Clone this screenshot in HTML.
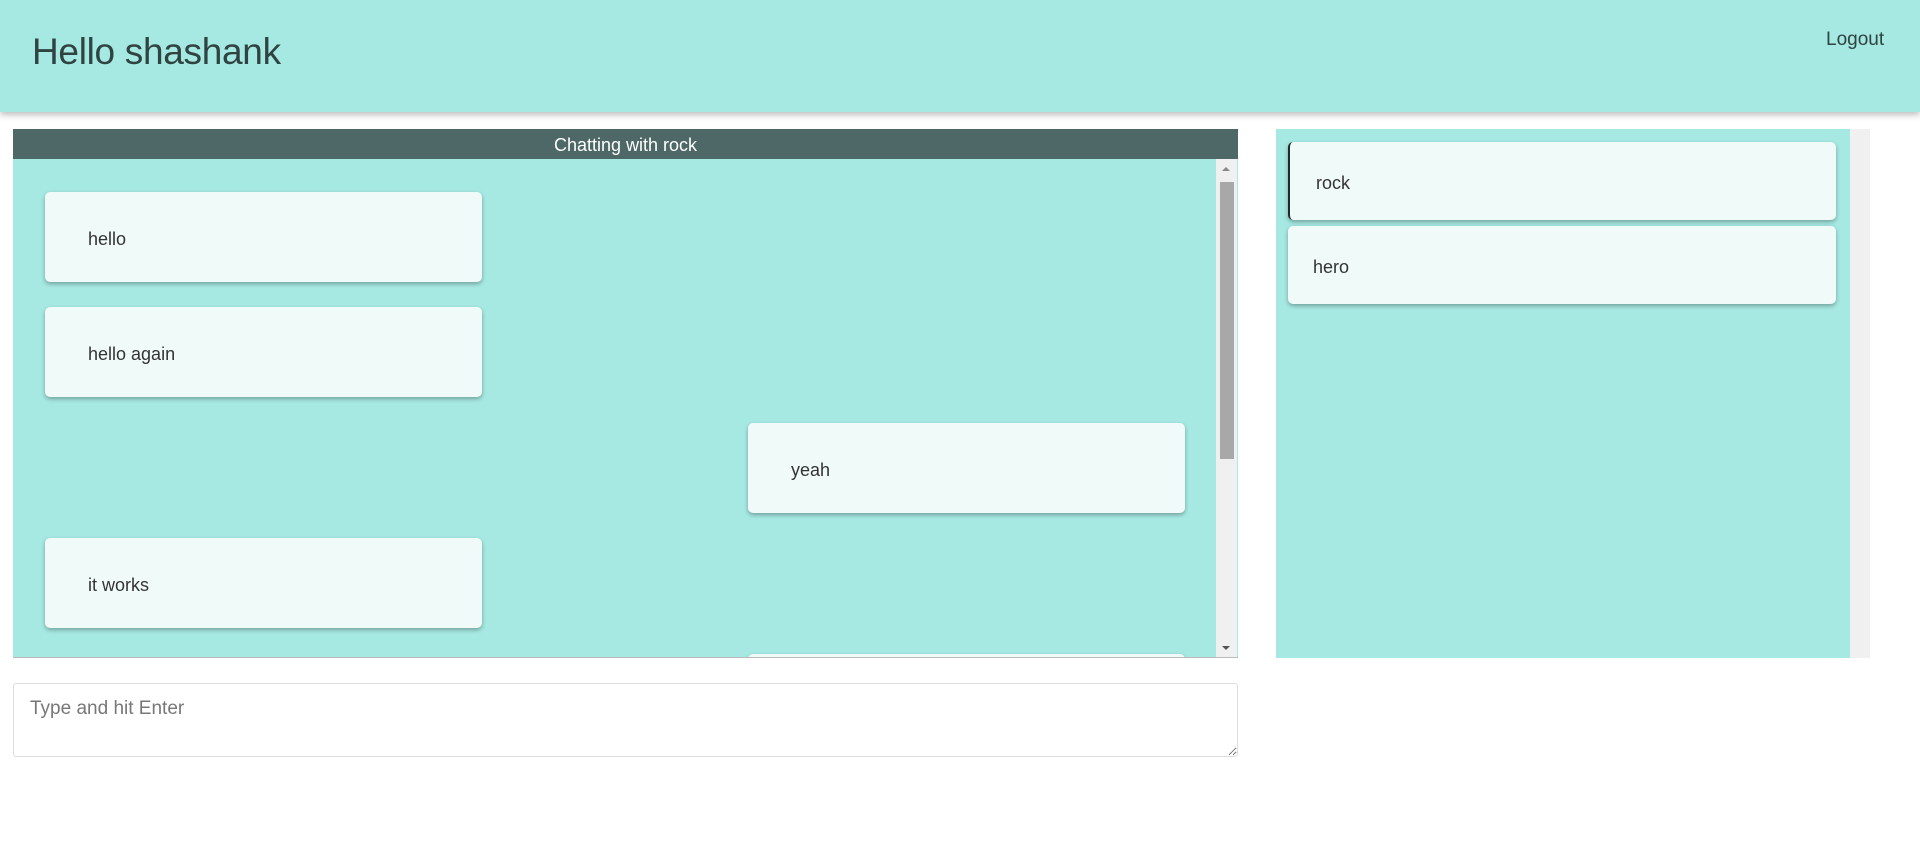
<!DOCTYPE html>
<html><head><meta charset="utf-8"><style>
*{box-sizing:border-box;margin:0;padding:0}
body{width:1920px;height:858px;background:#fff;font-family:"Liberation Sans",sans-serif;position:relative;overflow:hidden;color:#333}
.hdr{position:absolute;left:0;top:0;width:1920px;height:112px;background:#a6e8e2;box-shadow:0 3px 6px rgba(0,0,0,.25)}
.hdr h1{position:absolute;left:32px;top:31px;font-size:37px;font-weight:normal;color:#2f4340;letter-spacing:-0.3px}
.hdr .lo{position:absolute;left:1826px;top:29px;font-size:19px;color:#2f4340}
.chat{position:absolute;left:13px;top:129px;width:1225px;height:529px;background:#a6e8e2;overflow:hidden;border-bottom:1px solid #bbb}
.ch{height:30px;background:#4d6866;color:#fff;text-align:center;font-size:18px;line-height:32px}
.sb{position:absolute;left:1203px;top:30px;width:21px;height:499px;background:#f0f0f0}
.sb .th{position:absolute;left:4px;top:23px;width:14px;height:277px;background:#a8a8a8}
.sb .u{position:absolute;left:6px;top:8px;border:4px solid transparent;border-bottom:4px solid #888;border-top:0}
.sb .d{position:absolute;left:6px;bottom:8px;border:4px solid transparent;border-top:4px solid #555;border-bottom:0}
.m{position:absolute;width:437px;height:90px;background:#f0faf8;border-radius:5px;box-shadow:0 2px 4px rgba(0,0,0,.3);font-size:18px;padding-left:43px;line-height:94px;color:#333}
.side{position:absolute;left:1276px;top:129px;width:574px;height:529px;background:#a6e8e2}
.ssb{position:absolute;left:1850px;top:129px;width:20px;height:529px;background:#f0f0f0}
.c{position:absolute;left:12px;width:548px;height:78px;background:#f0faf8;border-radius:5px;box-shadow:0 2px 4px rgba(0,0,0,.3);font-size:18px;line-height:82px;padding-left:25px}
textarea{position:absolute;left:13px;top:683px;width:1225px;height:74px;border:1px solid #ddd;border-radius:3px;font-family:"Liberation Sans",sans-serif;font-size:19px;padding:14px 16px;resize:vertical}
textarea::placeholder{color:#777}
</style></head><body>
<div class="hdr"><h1>Hello shashank</h1><div class="lo">Logout</div></div>
<div class="chat"><div class="ch">Chatting with rock</div>
<div class="m" style="left:32px;top:63px">hello</div>
<div class="m" style="left:32px;top:178px">hello again</div>
<div class="m" style="left:735px;top:294px">yeah</div>
<div class="m" style="left:32px;top:409px">it works</div>
<div class="m" style="left:735px;top:525px"></div>
<div class="sb"><div class="u"></div><div class="th"></div><div class="d"></div></div>
</div>
<div class="side">
<div class="c" style="top:13px;border-left:2px solid #1d2a28;padding-left:26px">rock</div>
<div class="c" style="top:97px">hero</div>
</div>
<div class="ssb"></div>
<textarea placeholder="Type and hit Enter"></textarea>
</body></html>
